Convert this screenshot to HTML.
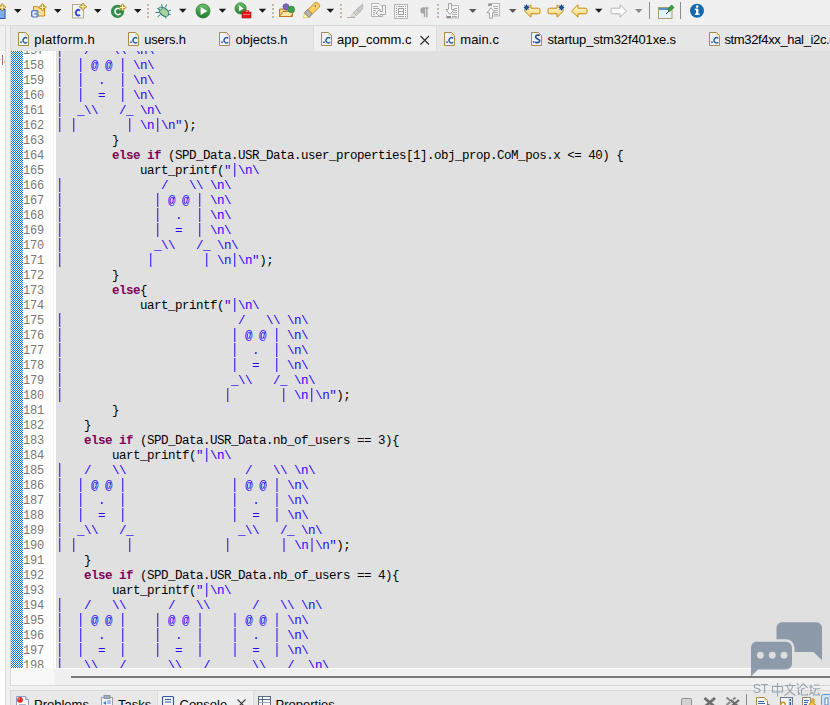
<!DOCTYPE html>
<html><head><meta charset="utf-8">
<style>
html,body{margin:0;padding:0;}
body{width:830px;height:705px;overflow:hidden;position:relative;background:#f0f0f0;font-family:"Liberation Sans",sans-serif;}
.a{position:absolute;}
#tbline{left:0;top:25px;width:830px;height:1px;background:#e3e3e3;}
#leftp{left:0;top:25px;width:5px;height:680px;background:#fff;border-right:1px solid #d9d9d9;}
#lefthead{left:0;top:25px;width:5px;height:24px;background:#f0f0f0;border-top:1px solid #d9d9d9;border-bottom:1px solid #e6e6e6;}
#frame{left:10px;top:25px;width:819px;height:659px;border:1px solid #d9d9d9;border-right:none;background:#f0f0f0;}
#tabs{left:11px;top:26px;width:819px;height:25px;background:#e6e6e6;}
#atab{left:313px;top:26px;width:124px;height:25px;background:#f0f0f0;border-left:1px solid #dcdcdc;border-right:1px solid #dcdcdc;box-sizing:border-box;}
.tt{position:absolute;top:32px;font-size:13px;line-height:15px;color:#000;white-space:nowrap;}
.ic{position:absolute;}
#checker{left:11px;top:51px;width:12px;height:617px;
 background-color:#fff;
 background-image:conic-gradient(#fff 25%, #0a78dc 0 50%, #fff 0 75%, #0a78dc 0);
 background-size:2px 2px;}
#nums{left:23px;top:51px;width:33px;height:617px;background:#fff;overflow:hidden;}
#nums pre, #code pre{margin:0;font-family:"Liberation Mono",monospace;font-size:12.5px;letter-spacing:-0.5px;line-height:15px;position:absolute;top:-7px;left:0;}
#nums pre{color:#787878;font-size:12px;letter-spacing:-0.2px;}
#code{left:56px;top:51px;width:774px;height:617px;background:#e0e0e0;overflow:hidden;}
#code pre{color:#000;}
.s{color:#2a00ff;}
.p{display:inline-block;transform:scaleY(1.12);transform-origin:50% 60%;}
.k{color:#7f0055;font-weight:bold;}
#hsl{left:11px;top:668px;width:43px;height:17px;background:#f8f8f8;}
#hsr{left:54px;top:668px;width:776px;height:17px;background:#f0f0f0;}
#thumb{left:71px;top:676px;width:759px;height:2px;background:#7a7a7a;}
#bpanel{left:10px;top:690px;width:820px;height:15px;border-top:1px solid #d9d9d9;border-left:1px solid #d9d9d9;background:#e8e8e8;}
#ctab{left:157px;top:691px;width:97px;height:14px;background:#f0f0f0;border-left:1px solid #dcdcdc;border-right:1px solid #dcdcdc;box-sizing:border-box;}
.bt{position:absolute;top:697px;font-size:13px;line-height:15px;color:#000;white-space:nowrap;}
</style></head><body>
<svg class="a" style="left:0;top:0" width="830" height="25" viewBox="0 0 830 25">
<defs>
<g id="star"><path d="M0,-3.8 L1.6,-1.6 L3.8,0 L1.6,1.6 L0,3.8 L-1.6,1.6 L-3.8,0 L-1.6,-1.6Z" fill="#c99a1e" stroke="#9a740e" stroke-width="0.6"/><path d="M0,-2.7 V2.7 M-2.7,0 H2.7" stroke="#fff6c4" stroke-width="1.1"/></g>
<g id="dd"><polygon points="0,9 7.5,9 3.75,13" /></g>
<g id="dots"><rect x="0" y="4" width="2" height="2"/><rect x="0" y="8" width="2" height="2"/><rect x="0" y="12" width="2" height="2"/><rect x="0" y="16" width="2" height="2"/></g>
<linearGradient id="gplay" x1="0" y1="0" x2="0" y2="1"><stop offset="0" stop-color="#6cc06c"/><stop offset="1" stop-color="#1e7e2c"/></linearGradient>
<linearGradient id="garrow" x1="0" y1="0" x2="0" y2="1"><stop offset="0" stop-color="#fffbe0"/><stop offset="1" stop-color="#f3cf6a"/></linearGradient>
</defs>
<g fill="#1a1a1a">
<use href="#dd" x="14" y="0"/><use href="#dd" x="54" y="0"/><use href="#dd" x="94" y="0"/><use href="#dd" x="134" y="0"/>
<use href="#dd" x="179" y="-0.2"/><use href="#dd" x="218.7" y="-0.2"/><use href="#dd" x="258.7" y="-0.2"/><use href="#dd" x="326.6" y="-0.2"/>
<use href="#dd" x="595" y="-0.2"/>
</g>
<g fill="#5a5a5a"><use href="#dd" x="469" y="0"/><use href="#dd" x="509" y="0"/></g>
<g fill="#8a8a8a"><use href="#dd" x="635" y="0"/></g>
<g fill="#c2b8a4"><use href="#dots" x="147"/><use href="#dots" x="272"/><use href="#dots" x="340"/><use href="#dots" x="437"/></g>
<rect x="649" y="2" width="1" height="17" fill="#8c8c8c"/><rect x="680" y="2" width="1" height="17" fill="#8c8c8c"/>
<!-- icon1 partial -->
<rect x="-3" y="9.5" width="8" height="9" fill="#7eaeea" stroke="#2a4cae" stroke-width="1"/>
<use href="#star" x="2.2" y="7.2"/>
<!-- icon2 folder + C -->
<path d="M33.5,6.5 h4 l1,1.5 h6 v8 h-11 z" fill="#fbdc94" stroke="#c98a2c" stroke-width="1"/>
<rect x="31.5" y="10.5" width="6.5" height="6.5" rx="1" fill="#86a4dc" stroke="#5a78b8" stroke-width="1"/>
<path d="M36.2,12.4 a1.9,1.9 0 1 0 0,2.8" fill="none" stroke="#fff" stroke-width="1.2"/>
<use href="#star" x="42.5" y="7.2"/>
<!-- icon3 doc C -->
<rect x="72.5" y="4.5" width="11" height="13.5" fill="#eef2fa" stroke="#b4ab8c" stroke-width="1"/>
<path d="M80,10.5 a2.6,2.8 0 1 0 0,4.4" fill="none" stroke="#2f46c4" stroke-width="1.8"/>
<use href="#star" x="83" y="6.8"/>
<!-- icon4 green C -->
<circle cx="117.5" cy="11.4" r="6.6" fill="#348e4c"/><path d="M120.6,9.4 A3.2,3.2 0 1 0 120.6,13.5" stroke="#fff" stroke-width="1.5" fill="none"/>
<use href="#star" x="122.6" y="7.5"/>
<!-- bug -->
<g stroke="#2c7c7c" stroke-width="1" fill="none">
<path d="M157,8 l3,2 M155.5,12.5 h4 M157.5,17 l3,-2.5 M161.5,4 l1,3.5 M166.5,4.5 l-1,3 M171,10 l-3.5,1.5 M170.5,14.5 l-3.5,-1 M166,18.5 l-1,-3"/>
</g>
<ellipse cx="164" cy="12" rx="3.6" ry="5.4" transform="rotate(-50 164 12)" fill="#a9d29c" stroke="#2a7a80" stroke-width="1"/>
<circle cx="160.5" cy="8.6" r="1.6" fill="#b8dcc0" stroke="#2a7a80" stroke-width="0.8"/>
<!-- play -->
<circle cx="203" cy="11" r="7" fill="url(#gplay)" stroke="#1f7a2c" stroke-width="0.8"/>
<path d="M200.6,6.9 L207.4,11 L200.6,15.1Z" fill="#fff"/>
<!-- run with toolbox -->
<circle cx="240.6" cy="8.4" r="5.6" fill="url(#gplay)" stroke="#1f7a2c" stroke-width="0.7"/>
<path d="M238.9,5.3 L243.6,8.4 L238.9,11.5Z" fill="#fff"/>
<rect x="242" y="12" width="9" height="6" fill="#e31d1d" stroke="#b01010" stroke-width="0.6"/>
<rect x="244.5" y="10.8" width="4" height="1.8" fill="none" stroke="#d01010" stroke-width="0.9"/>
<path d="M243,14.5 h7" stroke="#ff9090" stroke-width="0.7"/>
<!-- open folder with balls -->
<path d="M279.5,9 h5 l1,1 h7 v6.5 h-13 z" fill="#f7d088" stroke="#c07a26" stroke-width="1"/>
<path d="M279.5,16.5 l3.5,-5 h11 l-3.5,5 z" fill="#fde4a8" stroke="#c07a26" stroke-width="1"/>
<circle cx="286" cy="6.8" r="3.1" fill="#7c64bc" stroke="#5a48a0" stroke-width="0.6"/>
<circle cx="291.3" cy="9.4" r="3.3" fill="#40a050" stroke="#2a7a38" stroke-width="0.6"/>
<!-- highlighter -->
<g transform="translate(311,10.9) rotate(-44)">
<path d="M-10.5,0 L-6,-3 L-6,3Z" fill="#fffad0" stroke="#e6c860" stroke-width="0.9"/>
<rect x="-6" y="-3.3" width="5" height="6.6" fill="#b4b2ae" stroke="#857a66" stroke-width="0.9"/>
<path d="M-1,-3.1 H8.5 a2,3.1 0 0 1 0,6.2 H-1Z" fill="#f6cf66" stroke="#c38c22" stroke-width="0.9"/>
<circle cx="6.5" cy="-0.5" r="0.8" fill="#3a62b0"/>
</g>
<!-- gray highlighter -->
<path d="M347,17.5 h8" stroke="#b0b0b0" stroke-width="1"/>
<path d="M351,17 l2.5,-4.5 l3,3 z" fill="#e8e6d8" stroke="#c0c0b0" stroke-width="0.8"/>
<path d="M353.5,12.5 l3,-3 l3,3 l-3,3 z" fill="#d0d0d0" stroke="#b0b0b0" stroke-width="0.8"/>
<path d="M356.5,9.5 l6,-5.5 l0.5,4 l-3.5,4.5 z" fill="#c8c8c8" stroke="#b0b0b0" stroke-width="0.8"/>
<!-- gray doc with return arrow -->
<path d="M371.5,3.5 h7.5 l3.5,3.5 v9.5 h-11 z" fill="#f6f6f6" stroke="#b4b4b4" stroke-width="1"/>
<path d="M373,6.5 h5 M373,8.5 h6 M373,10.5 h3 M373,12.5 h2 M373,14.5 h2" stroke="#a6a6a6" stroke-width="1"/>
<path d="M382.5,5.5 h3 v9 h-5.5 v2.5 l-4,-4 l4,-4 v2.5 h2.5z" fill="#f4f4f4" stroke="#a8a8a8" stroke-width="1"/>
<!-- gray film doc -->
<rect x="394.5" y="4.5" width="13" height="14" fill="#f6f6f6" stroke="#b4b4b4" stroke-width="1"/>
<path d="M396,6 h1 M396,8 h1 M396,10 h1 M396,12 h1 M396,14 h1 M396,16 h1 M405,6 h1 M405,8 h1 M405,10 h1 M405,12 h1 M405,14 h1 M405,16 h1" stroke="#9a9a9a" stroke-width="1" transform="translate(0,0.5)"/>
<rect x="398.5" y="8.5" width="5" height="6" fill="none" stroke="#a0a0a0" stroke-width="1"/>
<path d="M398,6.5 h6 M398,11.5 h6 M398,16.5 h6" stroke="#a6a6a6" stroke-width="1"/>
<!-- pilcrow -->
<path d="M423.5,7.2 h5 v1.6 h-0.9 v8.4 h-1.5 v-8.4 h-0.8 v8.4 h-1.5 v-3.6 h-0.3 a3,3 0 0 1 0,-6.4z" fill="#a6a6a6"/>
<!-- down arrow doc -->
<path d="M449.5,5.5 h9 v12.5 h-12 v-3" fill="#f6f6f6" stroke="#b4b4b4" stroke-width="1"/>
<path d="M454,8.5 h3 M454,10.5 h3 M453,12.5 h4 M452,14.5 h5 M452,16.5 h5" stroke="#a8a8a8" stroke-width="1"/>
<path d="M448.5,3.5 h3 v6 h2.5 l-4,5 l-4,-5 h2.5z" fill="#fafafa" stroke="#a0a0a0" stroke-width="1"/>
<rect x="447" y="16" width="4" height="2" fill="#8a8a8a"/>
<!-- up arrow doc -->
<path d="M488.5,3.5 h11 v12.5 h-6" fill="#f6f6f6" stroke="#b4b4b4" stroke-width="1"/>
<path d="M493,6.5 h5 M494,8.5 h4 M494,10.5 h4 M494,12.5 h4 M494,14.5 h4" stroke="#a8a8a8" stroke-width="1"/>
<rect x="488" y="4" width="4" height="2" fill="#9a9a9a"/>
<path d="M489.5,18.2 h3 v-5.5 h2.5 l-4,-5 l-4,5 h2.5z" fill="#fafafa" stroke="#a0a0a0" stroke-width="1"/>
<!-- yellow arrows -->
<path d="M524.5,11 L531,4.8 V8.2 H538.5 a1.5,1.5 0 0 1 1.5,1.5 V12.3 a1.5,1.5 0 0 1 -1.5,1.5 H531 V17.2 Z" fill="url(#garrow)" stroke="#c58a10" stroke-width="1"/><path d="M526.5,4.5 v6 M523.7,7.5 h5.6 M524.5,5.5 l4,4 M528.5,5.5 l-4,4" stroke="#1c4f8c" stroke-width="1.1"/>
<path d="M563.5,11 L557,4.8 V8.2 H549.5 a1.5,1.5 0 0 0 -1.5,1.5 V12.3 a1.5,1.5 0 0 0 1.5,1.5 H557 V17.2 Z" fill="url(#garrow)" stroke="#c58a10" stroke-width="1"/><path d="M561.5,4.5 v6 M558.7,7.5 h5.6 M559.5,5.5 l4,4 M563.5,5.5 l-4,4" stroke="#1c4f8c" stroke-width="1.1"/>
<path d="M571.5,11 L578,4.8 V8.2 H585.5 a1.5,1.5 0 0 1 1.5,1.5 V12.3 a1.5,1.5 0 0 1 -1.5,1.5 H578 V17.2 Z" fill="url(#garrow)" stroke="#c58a10" stroke-width="1"/>
<path d="M626.5,11 L620,4.8 V8.2 H612.5 a1.5,1.5 0 0 0 -1.5,1.5 V12.3 a1.5,1.5 0 0 0 1.5,1.5 H620 V17.2 Z" fill="#fafafa" stroke="#b4b4b4" stroke-width="1"/>
<!-- window pin -->
<rect x="658.5" y="7.5" width="13.5" height="11" fill="#e4f2fb" stroke="#a89a70" stroke-width="1"/>
<rect x="659" y="8" width="12.5" height="2" fill="#5a8cd0"/>
<path d="M666,14 l3,-3" stroke="#303030" stroke-width="1"/>
<path d="M667.5,9.5 l4,-4.5 l2.5,2.5 l-4.5,4 z" fill="#3aa040" stroke="#2a7a2a" stroke-width="0.8"/>
<!-- info -->
<circle cx="697" cy="10.8" r="7" fill="#1468ad"/>
<rect x="696" y="9" width="2.4" height="5.5" fill="#fff"/><rect x="694.8" y="13.6" width="4.8" height="1.3" fill="#fff"/><rect x="694.8" y="8.6" width="3.2" height="1.3" fill="#fff"/>
<circle cx="697.2" cy="6.6" r="1.3" fill="#fff"/>
</svg>

<div id="tbline" class="a"></div>
<div id="leftp" class="a"></div>
<div id="lefthead" class="a"></div>
<div class="a" style="left:2px;top:55px;width:1px;height:10px;background:#a86878"></div><div class="a" style="left:4px;top:60px;width:1px;height:3px;background:#f8c888"></div><div class="a" style="left:0px;top:59px;width:1px;height:1px;background:#a8c8f0"></div>
<div id="frame" class="a"></div>
<div id="tabs" class="a"></div>
<div id="atab" class="a"></div>
<svg class="ic" style="left:18px;top:32px" width="12" height="15" viewBox="0 0 12 15"><path d="M0.5,0.5 H7.5 L10.5,3.5 V13.5 H0.5Z" fill="#eef3fb" stroke="#a88a40" stroke-width="1"/><path d="M7.5,0.8 V3.5 H10.2Z" fill="#e9c66a"/><rect x="2.2" y="9.4" width="1.6" height="1.6" fill="#2a5a9a"/><path d="M9.2,6.4 a2.5,2.6 0 1 0 0,3.9" fill="none" stroke="#2a5a9a" stroke-width="1.4"/></svg>
<span class="tt" style="left:34.3px;letter-spacing:0.3px">platform.h</span>
<svg class="ic" style="left:128px;top:32px" width="12" height="15" viewBox="0 0 12 15"><path d="M0.5,0.5 H7.5 L10.5,3.5 V13.5 H0.5Z" fill="#eef3fb" stroke="#a88a40" stroke-width="1"/><path d="M7.5,0.8 V3.5 H10.2Z" fill="#e9c66a"/><rect x="2.2" y="9.4" width="1.6" height="1.6" fill="#2a5a9a"/><path d="M9.2,6.4 a2.5,2.6 0 1 0 0,3.9" fill="none" stroke="#2a5a9a" stroke-width="1.4"/></svg>
<span class="tt" style="left:144.2px;letter-spacing:-0.15px">users.h</span>
<svg class="ic" style="left:219px;top:32px" width="12" height="15" viewBox="0 0 12 15"><path d="M0.5,0.5 H7.5 L10.5,3.5 V13.5 H0.5Z" fill="#eef3fb" stroke="#a88a40" stroke-width="1"/><path d="M7.5,0.8 V3.5 H10.2Z" fill="#e9c66a"/><rect x="2.2" y="9.4" width="1.6" height="1.6" fill="#2a5a9a"/><path d="M9.2,6.4 a2.5,2.6 0 1 0 0,3.9" fill="none" stroke="#2a5a9a" stroke-width="1.4"/></svg>
<span class="tt" style="left:235.5px;letter-spacing:0px">objects.h</span>
<svg class="ic" style="left:321px;top:32px" width="12" height="15" viewBox="0 0 12 15"><path d="M0.5,0.5 H7.5 L10.5,3.5 V13.5 H0.5Z" fill="#eef3fb" stroke="#a88a40" stroke-width="1"/><path d="M7.5,0.8 V3.5 H10.2Z" fill="#e9c66a"/><rect x="2.2" y="9.4" width="1.6" height="1.6" fill="#2a5a9a"/><path d="M9.2,6.4 a2.5,2.6 0 1 0 0,3.9" fill="none" stroke="#2a5a9a" stroke-width="1.4"/></svg>
<span class="tt" style="left:337px;letter-spacing:0px">app_comm.c</span>
<svg class="ic" style="left:444px;top:32px" width="12" height="15" viewBox="0 0 12 15"><path d="M0.5,0.5 H7.5 L10.5,3.5 V13.5 H0.5Z" fill="#eef3fb" stroke="#a88a40" stroke-width="1"/><path d="M7.5,0.8 V3.5 H10.2Z" fill="#e9c66a"/><rect x="2.2" y="9.4" width="1.6" height="1.6" fill="#2a5a9a"/><path d="M9.2,6.4 a2.5,2.6 0 1 0 0,3.9" fill="none" stroke="#2a5a9a" stroke-width="1.4"/></svg>
<span class="tt" style="left:460.3px;letter-spacing:0.1px">main.c</span>
<svg class="ic" style="left:531px;top:32px" width="12" height="15" viewBox="0 0 12 15"><path d="M0.5,0.5 H7.5 L10.5,3.5 V13.5 H0.5Z" fill="#eef3fb" stroke="#a88a40" stroke-width="1"/><path d="M7.5,0.8 V3.5 H10.2Z" fill="#e9c66a"/><rect x="1.9" y="9.2" width="1.5" height="1.5" fill="#1e4a86"/><path d="M8.6,3.6 c-0.9,-0.8 -4,-0.9 -4,1.4 c0,2.2 4.1,1.7 4.1,3.8 c0,2.2 -3.5,2.2 -4.6,1.2" fill="none" stroke="#1e4a86" stroke-width="1.6"/></svg>
<span class="tt" style="left:547.5px;letter-spacing:-0.15px">startup_stm32f401xe.s</span>
<svg class="ic" style="left:709px;top:32px" width="12" height="15" viewBox="0 0 12 15"><path d="M0.5,0.5 H7.5 L10.5,3.5 V13.5 H0.5Z" fill="#eef3fb" stroke="#a88a40" stroke-width="1"/><path d="M7.5,0.8 V3.5 H10.2Z" fill="#e9c66a"/><rect x="2.2" y="9.4" width="1.6" height="1.6" fill="#2a5a9a"/><path d="M9.2,6.4 a2.5,2.6 0 1 0 0,3.9" fill="none" stroke="#2a5a9a" stroke-width="1.4"/></svg>
<span class="tt" style="left:724.4px;letter-spacing:-0.35px">stm32f4xx_hal_i2c.c</span>
<svg class="ic" style="left:419px;top:35px" width="12" height="10" viewBox="0 0 12 10"><path d="M1.5,1 L10,9.5 M10,1 L1.5,9.5" stroke="#2a2a2a" stroke-width="1.1"/></svg>
<div id="checker" class="a"></div>
<div class="a" style="left:53px;top:51px;width:1px;height:617px;background:#f3f3f3;z-index:2"></div>
<div id="nums" class="a"><pre>157
158
159
160
161
162
163
164
165
166
167
168
169
170
171
172
173
174
175
176
177
178
179
180
181
182
183
184
185
186
187
188
189
190
191
192
193
194
195
196
197
198</pre></div>
<div id="code" class="a"><pre><span class="s"><span class="p">|</span>   /   \\ \n\</span>
<span class="s"><span class="p">|</span>  <span class="p">|</span> @ @ <span class="p">|</span> \n\</span>
<span class="s"><span class="p">|</span>  <span class="p">|</span>  .  <span class="p">|</span> \n\</span>
<span class="s"><span class="p">|</span>  <span class="p">|</span>  =  <span class="p">|</span> \n\</span>
<span class="s"><span class="p">|</span>  _\\   /_ \n\</span>
<span class="s"><span class="p">|</span> <span class="p">|</span>       <span class="p">|</span> \n<span class="p">|</span>\n&quot;</span>);
        }
        <span class="k">else</span> <span class="k">if</span> (SPD_Data.USR_Data.user_properties[1].obj_prop.CoM_pos.x &lt;= 40) {
            uart_printf(<span class="s">&quot;<span class="p">|</span>\n\</span>
<span class="s"><span class="p">|</span>              /   \\ \n\</span>
<span class="s"><span class="p">|</span>             <span class="p">|</span> @ @ <span class="p">|</span> \n\</span>
<span class="s"><span class="p">|</span>             <span class="p">|</span>  .  <span class="p">|</span> \n\</span>
<span class="s"><span class="p">|</span>             <span class="p">|</span>  =  <span class="p">|</span> \n\</span>
<span class="s"><span class="p">|</span>             _\\   /_ \n\</span>
<span class="s"><span class="p">|</span>            <span class="p">|</span>       <span class="p">|</span> \n<span class="p">|</span>\n&quot;</span>);
        }
        <span class="k">else</span>{
            uart_printf(<span class="s">&quot;<span class="p">|</span>\n\</span>
<span class="s"><span class="p">|</span>                         /   \\ \n\</span>
<span class="s"><span class="p">|</span>                        <span class="p">|</span> @ @ <span class="p">|</span> \n\</span>
<span class="s"><span class="p">|</span>                        <span class="p">|</span>  .  <span class="p">|</span> \n\</span>
<span class="s"><span class="p">|</span>                        <span class="p">|</span>  =  <span class="p">|</span> \n\</span>
<span class="s"><span class="p">|</span>                        _\\   /_ \n\</span>
<span class="s"><span class="p">|</span>                       <span class="p">|</span>       <span class="p">|</span> \n<span class="p">|</span>\n&quot;</span>);
        }
    }
    <span class="k">else</span> <span class="k">if</span> (SPD_Data.USR_Data.nb_of_users == 3){
        uart_printf(<span class="s">&quot;<span class="p">|</span>\n\</span>
<span class="s"><span class="p">|</span>   /   \\                 /   \\ \n\</span>
<span class="s"><span class="p">|</span>  <span class="p">|</span> @ @ <span class="p">|</span>               <span class="p">|</span> @ @ <span class="p">|</span> \n\</span>
<span class="s"><span class="p">|</span>  <span class="p">|</span>  .  <span class="p">|</span>               <span class="p">|</span>  .  <span class="p">|</span> \n\</span>
<span class="s"><span class="p">|</span>  <span class="p">|</span>  =  <span class="p">|</span>               <span class="p">|</span>  =  <span class="p">|</span> \n\</span>
<span class="s"><span class="p">|</span>  _\\   /_               _\\   /_ \n\</span>
<span class="s"><span class="p">|</span> <span class="p">|</span>       <span class="p">|</span>             <span class="p">|</span>       <span class="p">|</span> \n<span class="p">|</span>\n&quot;</span>);
    }
    <span class="k">else</span> <span class="k">if</span> (SPD_Data.USR_Data.nb_of_users == 4){
        uart_printf(<span class="s">&quot;<span class="p">|</span>\n\</span>
<span class="s"><span class="p">|</span>   /   \\      /   \\      /   \\ \n\</span>
<span class="s"><span class="p">|</span>  <span class="p">|</span> @ @ <span class="p">|</span>    <span class="p">|</span> @ @ <span class="p">|</span>    <span class="p">|</span> @ @ <span class="p">|</span> \n\</span>
<span class="s"><span class="p">|</span>  <span class="p">|</span>  .  <span class="p">|</span>    <span class="p">|</span>  .  <span class="p">|</span>    <span class="p">|</span>  .  <span class="p">|</span> \n\</span>
<span class="s"><span class="p">|</span>  <span class="p">|</span>  =  <span class="p">|</span>    <span class="p">|</span>  =  <span class="p">|</span>    <span class="p">|</span>  =  <span class="p">|</span> \n\</span>
<span class="s"><span class="p">|</span>  _\\   /_    _\\   /_    _\\   /_ \n\</span></pre></div>
<div id="hsl" class="a"></div>
<div id="hsr" class="a"></div>
<div class="a" style="left:54px;top:668px;width:776px;height:1px;background:#fcfcfc"></div>
<div id="thumb" class="a"></div>
<div id="bpanel" class="a"></div>
<div id="ctab" class="a"></div>

<svg class="a" style="left:0;top:690px" width="830" height="15" viewBox="0 690 830 15">
<!-- problems icon -->
<path d="M16.5,696.5 h9 l3,3 v8 h-12z" fill="#fafafa" stroke="#8aa0c0" stroke-width="1"/>
<path d="M25.5,696.5 v3 h3" fill="#dde6f2" stroke="#8aa0c0" stroke-width="1"/>
<circle cx="20" cy="699.8" r="2.9" fill="#e02828"/>
<circle cx="19.2" cy="698.9" r="0.9" fill="#ff9a9a"/>
<path d="M19,704.5 h7" stroke="#a8b8d0" stroke-width="1"/>
<!-- tasks icon -->
<rect x="101.5" y="697.5" width="11" height="9" fill="#f4f4f4" stroke="#a0a0a0" stroke-width="1"/>
<rect x="104" y="695.5" width="6" height="3" fill="#9fb0c0" stroke="#7a8aa0" stroke-width="0.8"/>
<path d="M103,703 l3,-2 v4z" fill="#3a80c8"/>
<path d="M107,701 h4 M107,703 h4" stroke="#3a70b0" stroke-width="0.8"/>
<!-- console icon -->
<rect x="162.5" y="696.5" width="11" height="10" rx="1" fill="#f0f4fa" stroke="#3a5a9a" stroke-width="1.2"/>
<path d="M165,699.5 h6 M165,702 h6" stroke="#3a5a9a" stroke-width="1"/>
<path d="M237.5,699.5 l8,8 M245.5,699.5 l-8,8" stroke="#333" stroke-width="1.1"/>
<!-- properties icon -->
<rect x="258.5" y="696.5" width="12" height="10" fill="#f8f8f8" stroke="#5a6a80" stroke-width="1"/>
<path d="M258.5,699.5 h12 M262.5,696.5 v10" stroke="#5a6a80" stroke-width="1"/>
<path d="M258.5,702.5 h12" stroke="#8a9ab0" stroke-width="0.8"/>
<!-- right icons -->
<rect x="681.5" y="698.5" width="10" height="9" rx="1" fill="#d2d2d2" stroke="#8e8e8e" stroke-width="1"/>
<path d="M704.5,698 l10.5,9 M715,698 l-10.5,9" stroke="#dcdcdc" stroke-width="4.2"/>
<path d="M704.5,698 l10.5,9 M715,698 l-10.5,9" stroke="#6c6c6c" stroke-width="2.6"/>
<path d="M726.5,697.5 l9,7.5 M735.5,697.5 l-9,7.5" stroke="#8c8c8c" stroke-width="2.2"/>
<path d="M730.5,700 l8.5,7 M739,700 l-8.5,7" stroke="#dadada" stroke-width="3.6"/>
<path d="M730.5,700 l8.5,7 M739,700 l-8.5,7" stroke="#6a6a6a" stroke-width="2"/>
<rect x="746" y="694" width="1" height="11" fill="#8a8a8a"/>
<path d="M756.5,697.5 h8 l3,3 v6 h-11z" fill="#fafafa" stroke="#a08a50" stroke-width="1"/>
<path d="M764.5,697.5 v3 h3z" fill="#e8c060"/>
<path d="M758,701.5 h6 M758,703.5 h7 M758,705.5 h7" stroke="#3a62b0" stroke-width="1"/>
<path d="M767,704 l3.5,2" stroke="#7a7a7a" stroke-width="1.6"/>
<rect x="780.5" y="697.5" width="12" height="9" fill="#f6f8fb" stroke="#6a7a90" stroke-width="1"/>
<rect x="788" y="698" width="4" height="8" fill="#dde8f5"/>
<rect x="789.5" y="699" width="1.5" height="1.8" fill="#2a5aa8"/><rect x="789.5" y="702" width="1.5" height="3.5" fill="#2a5aa8"/>
<circle cx="783" cy="704.5" r="2.2" fill="none" stroke="#c89020" stroke-width="1.4"/>
<path d="M802.5,697.5 h8 v9 h-8z" fill="#fafafa" stroke="#8a8060" stroke-width="1"/>
<path d="M804,700.5 h5 M804,702.5 h4 M804,704.5 h3" stroke="#3a62b0" stroke-width="1"/>
<path d="M808.5,706 l2,-4 l1.5,1 v-4 l2,0 v5 l2,1 l-1,3z" fill="#f6c84a" stroke="#c08a10" stroke-width="0.9"/>
<rect x="821.5" y="694.5" width="10" height="12" rx="2" fill="#cce4f8" stroke="#5a9ad8" stroke-width="1"/>
<path d="M825,698 h3 v7 h-3z" fill="#f8f8f8" stroke="#3a6aa8" stroke-width="0.8"/>
</svg>
<span class="bt" style="left:34px">Problems</span><span class="bt" style="left:118px">Tasks</span><span class="bt" style="left:179.5px">Console</span><span class="bt" style="left:275.5px">Properties</span>

<svg class="a" style="left:740px;top:615px" width="90" height="90" viewBox="740 615 90 90">
<defs><mask id="wm"><rect x="740" y="615" width="90" height="90" fill="#fff"/>
<path d="M757,641.7 h29 a6,6 0 0 1 6,6 v15.7 a6,6 0 0 1 -6,6 h-28 l-7,7.2 v-29 a6,6 0 0 1 6,-6z" fill="#000" stroke="#000" stroke-width="5"/></mask></defs>
<g fill="#7a8a9e" fill-opacity="0.82">
<path d="M782,622.3 h34.5 a5.5,5.5 0 0 1 5.5,5.5 v32.5 l-8.5,-8.3 h-31.5 a5.5,5.5 0 0 1 -5.5,-5.5 v-18.7 a5.5,5.5 0 0 1 5.5,-5.5z" mask="url(#wm)"/>
<path d="M757,641.7 h29 a6,6 0 0 1 6,6 v15.7 a6,6 0 0 1 -6,6 h-28 l-7,7.2 v-29 a6,6 0 0 1 6,-6z"/>
</g>
<circle cx="760.4" cy="655.2" r="3.4" fill="#dedede"/><circle cx="772.3" cy="655.2" r="3.4" fill="#dedede"/><circle cx="784" cy="655.2" r="3.4" fill="#dedede"/>
</svg>
<div class="a" style="left:752.8px;top:682px;font-size:12.5px;line-height:15px;color:#7a8a9e;opacity:0.75;letter-spacing:-0.5px">ST</div>
<svg class="a" style="left:770px;top:682px;opacity:0.75" width="54" height="16" viewBox="0 0 54 16" fill="none" stroke="#7f8ea0" stroke-width="1.1">
<path d="M2.5,4.5 h10 v5.5 h-10 z M7.5,1 v13.5"/>
<path d="M14.5,3.5 h11 M20,1 v2.2 M17,4 c1.5,4 4,7 8.5,9.5 M23,4 c-1.5,4 -4,7 -8.5,9.5"/>
<path d="M27,1.5 l1.8,1.8 M26.5,6 h2 v6.5 l1.5,-1.5 M33,1.5 l-3.5,4.5 M33,1.5 l4.5,4.5 M32,7 l3,-1 M31.5,6.5 v6.5 h6 v-1.5"/>
<path d="M39,5 h4 M41,2.5 v9 M39,12.5 l4.5,-2 M44,3 h5.5 M43,6.8 h7.5 M46,7 l-2.5,6 h6.5 M48,10.5 l1.8,2.8"/>
</svg>

</body></html>
